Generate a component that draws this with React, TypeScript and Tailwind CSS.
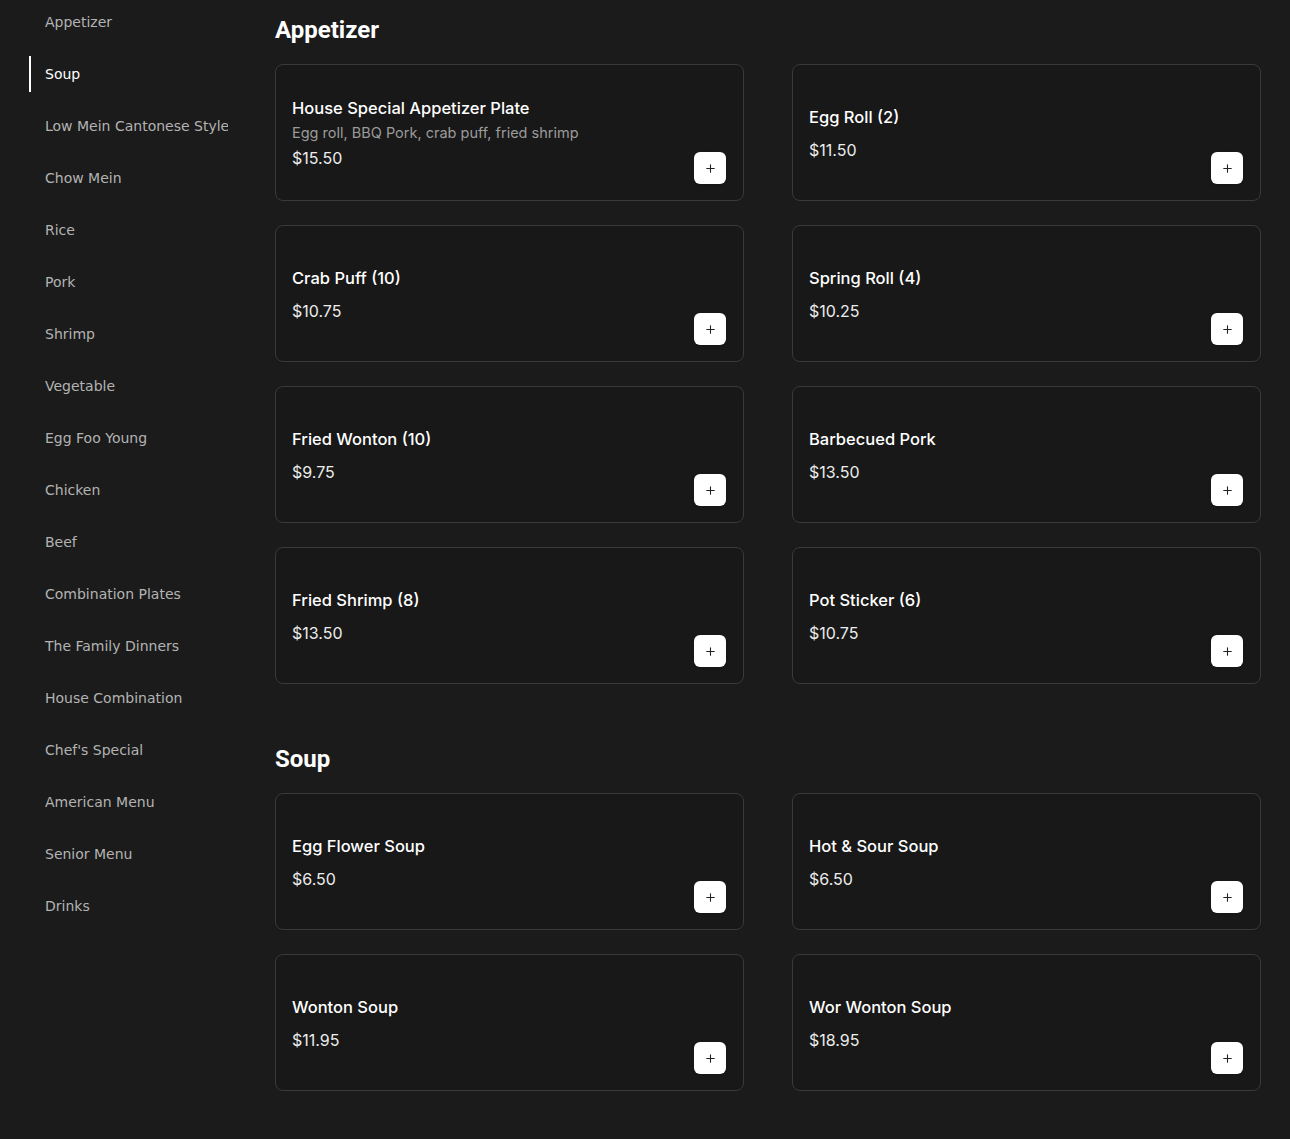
import React from "react";
import { Plus } from "lucide-react";

type Item = { name: string; price: string; desc?: string };

const categories = [
  "Appetizer",
  "Soup",
  "Low Mein Cantonese Style",
  "Chow Mein",
  "Rice",
  "Pork",
  "Shrimp",
  "Vegetable",
  "Egg Foo Young",
  "Chicken",
  "Beef",
  "Combination Plates",
  "The Family Dinners",
  "House Combination",
  "Chef's Special",
  "American Menu",
  "Senior Menu",
  "Drinks",
];

const sections: { title: string; items: Item[] }[] = [
  {
    title: "Appetizer",
    items: [
      { name: "House Special Appetizer Plate", desc: "Egg roll, BBQ Pork, crab puff, fried shrimp", price: "$15.50" },
      { name: "Egg Roll (2)", price: "$11.50" },
      { name: "Crab Puff (10)", price: "$10.75" },
      { name: "Spring Roll (4)", price: "$10.25" },
      { name: "Fried Wonton (10)", price: "$9.75" },
      { name: "Barbecued Pork", price: "$13.50" },
      { name: "Fried Shrimp (8)", price: "$13.50" },
      { name: "Pot Sticker (6)", price: "$10.75" },
    ],
  },
  {
    title: "Soup",
    items: [
      { name: "Egg Flower Soup", price: "$6.50" },
      { name: "Hot & Sour Soup", price: "$6.50" },
      { name: "Wonton Soup", price: "$11.95" },
      { name: "Wor Wonton Soup", price: "$18.95" },
    ],
  },
];

function Card({ item }: { item: Item }) {
  return (
    <div className="h-[137px] rounded-lg border border-[#3a3a3a] bg-[#181818] pl-4 pr-[17px] py-4 flex">
      <div className="flex-1 flex flex-col justify-center font-['Inter',sans-serif]">
        <div className="text-[16.5px] leading-[26px] font-medium text-white">{item.name}</div>
        {item.desc ? (
          <>
            <div className="text-[14.5px] leading-[24px] text-[#9b9b9b]">{item.desc}</div>
            <div className="text-[16px] leading-[26px] text-[#ececec]">{item.price}</div>
          </>
        ) : (
          <div className="mt-[8px] text-[16px] leading-[24px] text-[#ececec]">{item.price}</div>
        )}
      </div>
      <button className="self-end w-8 h-8 rounded-md bg-white flex items-center justify-center shadow-sm">
        <Plus size={13} strokeWidth={2} color="#222222" />
      </button>
    </div>
  );
}

export default function App() {
  return (
    <div className="min-h-[1139px] bg-[#1b1b1b] flex pl-[29px] pr-[29px] font-['DejaVu_Sans',sans-serif]">
      <aside className="w-[199px] shrink-0 pt-1 flex flex-col gap-4">
        {categories.map((c) => {
          const active = c === "Soup";
          return (
            <div
              key={c}
              className={
                active
                  ? "h-9 flex items-center pl-[14px] border-l-2 border-white text-white text-sm whitespace-nowrap overflow-hidden"
                  : "h-9 flex items-center pl-[16px] text-[#b3b3b3] text-sm whitespace-nowrap overflow-hidden"
              }
            >
              {c}
            </div>
          );
        })}
      </aside>
      <main className="flex-1 ml-[47px] pt-[14px]">
        {sections.map((s) => (
          <section key={s.title} className="mb-[59px]">
            <h2 className="h-8 leading-8 mb-[18px] text-[24px] font-bold text-white font-['Roboto',sans-serif]">
              {s.title}
            </h2>
            <div className="grid grid-cols-2 gap-x-12 gap-y-6">
              {s.items.map((it) => (
                <Card key={it.name} item={it} />
              ))}
            </div>
          </section>
        ))}
      </main>
    </div>
  );
}
